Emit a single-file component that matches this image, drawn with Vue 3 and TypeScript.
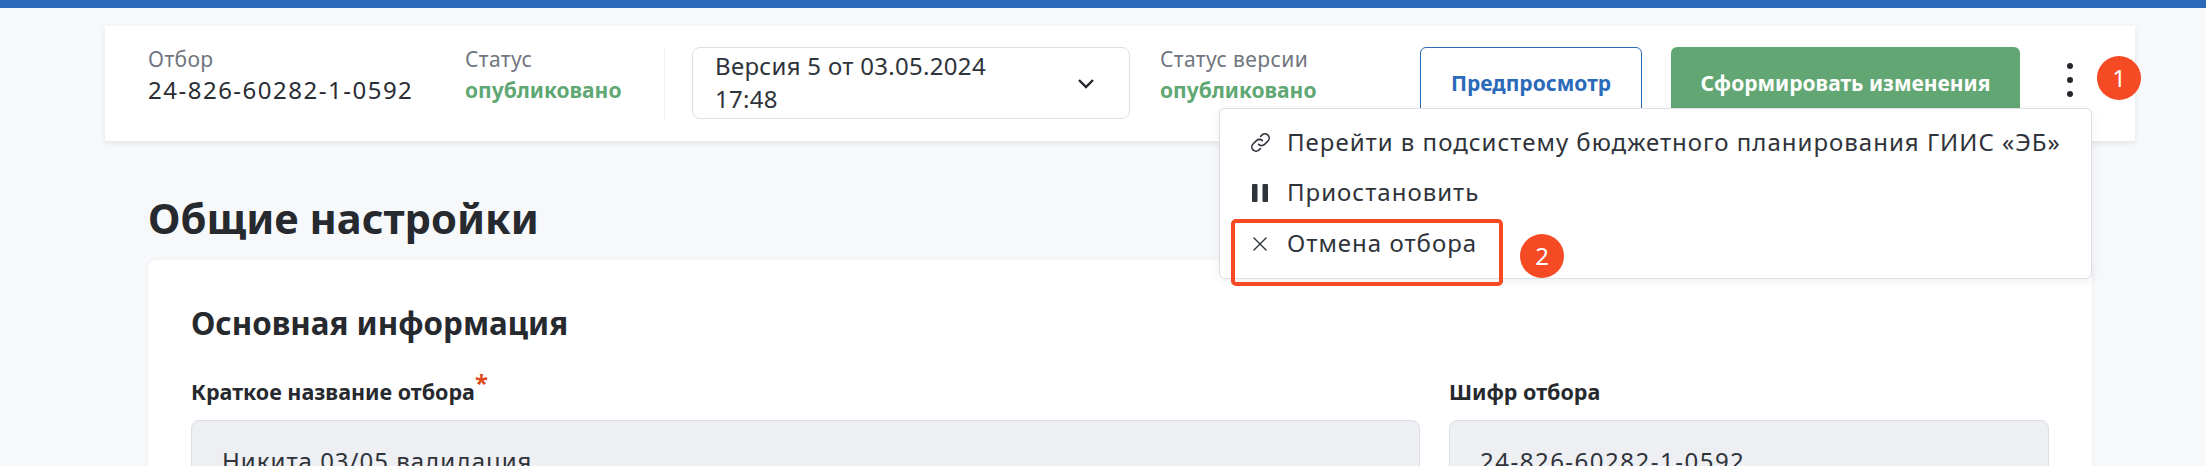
<script setup lang="ts">
const menu = [
  { id: 'link', text: 'Перейти в подсистему бюджетного планирования ГИИС «ЭБ»' },
  { id: 'pause', text: 'Приостановить' },
  { id: 'close', text: 'Отмена отбора' },
]
</script>

<template>
  <div class="page">
    <div class="topbar"></div>
    <header class="head">
      <div class="info first">
        <span class="lbl">Отбор</span>
        <span class="val">24-826-60282-1-0592</span>
      </div>
      <div class="info second">
        <span class="lbl">Статус</span>
        <span class="ok">опубликовано</span>
      </div>
      <div class="divider"></div>
      <div class="select">
        <span class="select-text">Версия 5 от 03.05.2024 17:48</span>
        <svg class="chev" width="18" height="11" viewBox="0 0 18 11" fill="none">
          <path d="M2 2l7 7 7-7" stroke="#24272c" stroke-width="2.4" />
        </svg>
      </div>
      <div class="info third">
        <span class="lbl">Статус версии</span>
        <span class="ok">опубликовано</span>
      </div>
      <button class="btn outline">Предпросмотр</button>
      <button class="btn solid">Сформировать изменения</button>
      <div class="dots"><i></i><i></i><i></i></div>
    </header>

    <h1 class="title">Общие настройки</h1>

    <section class="card">
      <h2 class="section">Основная информация</h2>
      <div class="fields">
        <div class="field wide">
          <label class="flabel">Краткое название отбора<sup class="req">*</sup></label>
          <div class="input">Никита 03/05 валидация</div>
        </div>
        <div class="field narrow">
          <label class="flabel">Шифр отбора</label>
          <div class="input code">24-826-60282-1-0592</div>
        </div>
      </div>
    </section>

    <div class="menu">
      <div v-for="m in menu" :key="m.id" class="item">
        <span class="ico">
          <svg v-if="m.id === 'link'" class="i-link" width="23" height="23" viewBox="0 0 22 22" fill="none" stroke="#2f333a" stroke-width="1.5" stroke-linecap="round">
            <path d="M9.2 12.8a4 4 0 0 0 5.7 0l3.2-3.2a4 4 0 0 0-5.7-5.7l-1.4 1.4" />
            <path d="M12.8 9.2a4 4 0 0 0-5.7 0l-3.2 3.2a4 4 0 0 0 5.7 5.7l1.4-1.4" />
          </svg>
          <svg v-else-if="m.id === 'pause'" class="i-small" width="16" height="18" viewBox="0 0 16 18" fill="#2f333a">
            <rect x="0" y="0" width="5.5" height="18" rx="1" />
            <rect x="10.5" y="0" width="5.5" height="18" rx="1" />
          </svg>
          <svg v-else class="i-small" width="16" height="16" viewBox="0 0 16 16" fill="none" stroke="#2f333a" stroke-width="1.4">
            <path d="M1.5 1.5l13 13M14.5 1.5l-13 13" />
          </svg>
        </span>
        <span>{{ m.text }}</span>
      </div>
    </div>

    <div class="mark-box"></div>
    <div class="badge b1">1</div>
    <div class="badge b2">2</div>
  </div>
</template>

<style>
html, body { margin: 0; background: #f7f8fa; }
</style>

<style scoped>
.page {
  position: relative;
  width: 2206px;
  height: 466px;
  overflow: hidden;
  background: #f7f8fa;
  font-family: "Noto Sans", "Open Sans", sans-serif;
  color: #2a2d33;
}
.topbar { height: 8px; background: #2b6ab9; }
.head {
  margin: 18px 0 0 105px;
  width: 2030px;
  height: 115px;
  box-sizing: border-box;
  padding: 21px 0 22px 43px;
  display: flex;
  align-items: stretch;
  background: #fff;
  box-shadow: 0 2px 6px rgba(40, 50, 70, .1);
}
.info { display: flex; flex-direction: column; justify-content: flex-start; }
.first { width: 317px; }
.second { width: 199px; }
.third { width: 260px; }
.lbl { font-size: 21px; line-height: 25px; letter-spacing: .4px; color: #70757f; }
.val { font-size: 24px; line-height: 36px; letter-spacing: 1.5px; color: #2a2d33; }
.ok { font-size: 21px; line-height: 36px; font-weight: 700; color: #5fa873; }
.divider { width: 1px; background: #eef0f3; margin-right: 27px; }
.select {
  width: 438px;
  box-sizing: border-box;
  padding: 0 34px 2px 22px;
  margin-right: 30px;
  border: 1px solid #dcdfe6;
  border-radius: 8px;
  display: flex;
  align-items: center;
  justify-content: space-between;
}
.chev { margin-top: 2px; }
.select-text { width: 320px; font-size: 24px; line-height: 33px; letter-spacing: .3px; color: #2f333a; }
.btn {
  font-family: inherit;
  font-size: 21px;
  font-weight: 700;
  border-radius: 6px;
  height: 72px;
  padding: 0;
  box-sizing: border-box;
}
.outline { width: 222px; margin-right: 29px; background: #fff; border: 1px solid #2b6ab9; color: #2b6ab9; }
.solid { width: 349px; background: #62a773; border: 0; color: #fff; }
.dots { width: 8px; margin-left: 47px; display: flex; flex-direction: column; gap: 8px; padding-top: 16px; }
.dots i { width: 6px; height: 6px; border-radius: 50%; background: #24272c; }
.title { margin: 51px 0 0 148px; font-size: 41.7px; line-height: 52px; font-weight: 700; color: #26292e; }
.card {
  margin: 16px 0 0 148px;
  width: 1944px;
  height: 300px;
  box-sizing: border-box;
  padding: 44px 43px 0;
  background: #fff;
  border-radius: 8px;
  box-shadow: 0 0 4px rgba(40, 50, 70, .05);
}
.section { margin: 0; font-size: 31.3px; line-height: 38px; font-weight: 700; color: #26292e; }
.fields { display: flex; gap: 29px; margin-top: 34px; }
.field { display: flex; flex-direction: column; }
.wide { width: 1229px; }
.narrow { width: 600px; }
.flabel { font-size: 21.5px; font-weight: 700; line-height: 32px; height: 32px; color: #26292e; }
.req { color: #e04a1c; font-size: 24px; line-height: 0; }
.input {
  margin-top: 12px;
  height: 80px;
  box-sizing: border-box;
  padding: 25px 30px;
  font-size: 24px;
  line-height: 30px;
  letter-spacing: 1px;
  background: #eeeff3;
  border: 1px solid #dcdfe6;
  border-radius: 8px;
  color: #2f333a;
}
.code { letter-spacing: 1.5px; }
.menu {
  position: absolute;
  left: 1219px;
  top: 108px;
  width: 873px;
  height: 171px;
  box-sizing: border-box;
  padding-top: 7px;
  background: #fff;
  border: 1px solid #dcdfe6;
  border-radius: 6px;
  box-shadow: 0 2px 8px rgba(40, 50, 70, .08);
}
.item { display: flex; align-items: center; height: 50.5px; font-size: 24px; letter-spacing: 1px; color: #2f333a; }
.ico { width: 67px; padding-left: 30px; padding-top: 3px; box-sizing: border-box; display: flex; align-items: center; }
.i-link { margin-left: -1px; }
.i-small { margin-left: 2px; }
.mark-box {
  position: absolute;
  left: 1231px;
  top: 219px;
  width: 272px;
  height: 67px;
  box-sizing: border-box;
  border: 4px solid #f54a24;
  border-radius: 5px;
}
.badge {
  position: absolute;
  width: 44px;
  height: 44px;
  border-radius: 50%;
  background: #f54a24;
  color: #fff;
  font-size: 24px;
  line-height: 44px;
  text-align: center;
}
.b1 { left: 2097px; top: 56px; }
.b2 { left: 1520px; top: 234px; }
</style>
